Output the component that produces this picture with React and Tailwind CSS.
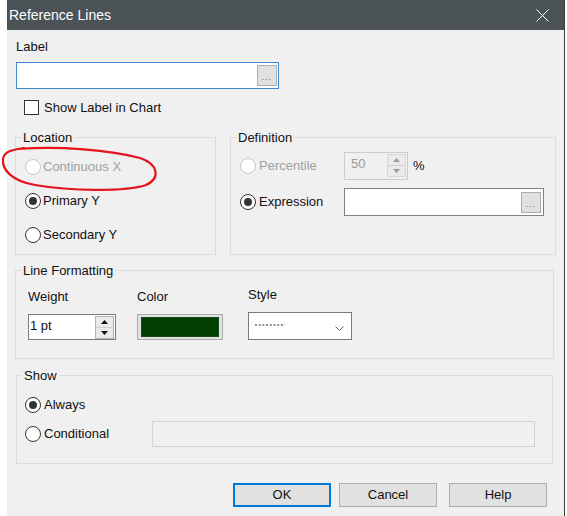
import React from 'react';

const Radio = ({ checked, disabled }) => (
  <span
    className={`flex h-[16px] w-[16px] shrink-0 items-center justify-center rounded-full border bg-white ${
      disabled ? 'border-[#c8c8c8]' : 'border-[#333333]'
    }`}
  >
    {checked && <span className="h-[8px] w-[8px] rounded-full bg-[#333333]" />}
  </span>
);

const DotsButton = () => (
  <span className="flex h-[21px] w-[20px] items-end justify-center border border-[#adadad] bg-[#e1e1e1] pb-[3px] text-[9px] leading-[9px] tracking-[1px] text-[#666]">
    ...
  </span>
);

const Arrow = ({ up, color }) => (
  <svg width="7" height="4" viewBox="0 0 7 4">
    {up ? <path d="M0 4 L3.5 0 L7 4 Z" fill={color} /> : <path d="M0 0 L3.5 4 L7 0 Z" fill={color} />}
  </svg>
);

const SpinButtons = ({ disabled }) => {
  const color = disabled ? '#9a9a9a' : '#111';
  return (
    <div className={`flex h-[23px] w-[19px] flex-col border ${disabled ? 'border-[#d6d6d6]' : 'border-[#b4b4b4]'}`}>
      <div className="flex flex-1 items-center justify-center border-b border-[#cfcfcf] bg-[#eaeaea]">
        <Arrow up color={color} />
      </div>
      <div className="flex flex-1 items-center justify-center bg-[#eaeaea]">
        <Arrow color={color} />
      </div>
    </div>
  );
};

const Legend = ({ children }) => (
  <legend className="ml-[5px] px-[2px] leading-[15px]">{children}</legend>
);

const App = () => {
  return (
    <div className="relative flex h-[516px] w-[567px] overflow-hidden bg-white font-['Liberation_Sans',Arial,sans-serif] text-[13px] text-[#111]">
      <div className="ml-[7px] flex w-[558px] flex-col border-r border-[#3b3b3b] bg-[#f0f0f0]">
        {/* title bar */}
        <div className="flex h-[30px] shrink-0 items-center justify-between bg-[#4b5357] pl-[2px] pr-[15px] text-white">
          <span className="text-[14px]">Reference Lines</span>
          <svg width="13" height="13" viewBox="0 0 13 13">
            <path d="M0.5 0.5 L12.5 12.5 M12.5 0.5 L0.5 12.5" stroke="#ffffff" strokeWidth="1" />
          </svg>
        </div>

        {/* label */}
        <div className="mt-[9px] ml-[9px] leading-[16px]">Label</div>
        <div className="mt-[7px] ml-[9px] flex h-[27px] w-[263px] items-center justify-end border border-[#3d8ad3] bg-white pr-[1px]">
          <DotsButton />
        </div>
        <div className="mt-[11px] ml-[17px] flex items-center">
          <span className="h-[15px] w-[15px] border border-[#333] bg-white" />
          <span className="ml-[5px] leading-[15px]">Show Label in Chart</span>
        </div>

        {/* location + definition */}
        <div className="mt-[15px] flex">
          <fieldset className="ml-[8px] h-[125px] w-[201px] border border-[#dcdcdc]">
            <Legend>Location</Legend>
            <div className="flex flex-col gap-[18px] pt-[14px] pl-[9px]">
              <div className="flex items-center">
                <Radio disabled />
                <span className="ml-[2px] leading-[16px] text-[#a0a0a0]">Continuous X</span>
              </div>
              <div className="flex items-center">
                <Radio checked />
                <span className="ml-[2px] leading-[16px]">Primary Y</span>
              </div>
              <div className="flex items-center">
                <Radio />
                <span className="ml-[2px] leading-[16px]">Secondary Y</span>
              </div>
            </div>
          </fieldset>

          <fieldset className="ml-[14px] h-[125px] w-[326px] border border-[#dcdcdc]">
            <Legend>Definition</Legend>
            <div className="flex flex-col gap-[8px] pt-[7px] pl-[9px]">
              <div className="flex h-[28px] items-center">
                <div className="flex w-[104px] items-center">
                  <Radio disabled />
                  <span className="ml-[3px] text-[#a0a0a0]">Percentile</span>
                </div>
                <div className="flex h-[28px] w-[64px] items-start justify-between border border-[#cccccc] bg-[#f0f0f0] pt-[1px] pr-[1px]">
                  <span className="pl-[6px] pt-[2px] leading-[16px] text-[#9a9a9a]">50</span>
                  <SpinButtons disabled />
                </div>
                <span className="ml-[5px]">%</span>
              </div>
              <div className="flex h-[28px] items-center">
                <div className="flex w-[104px] items-center">
                  <Radio checked />
                  <span className="ml-[3px]">Expression</span>
                </div>
                <div className="flex h-[28px] w-[200px] items-center justify-end border border-[#828282] bg-white pr-[2px]">
                  <DotsButton />
                </div>
              </div>
            </div>
          </fieldset>
        </div>

        {/* line formatting */}
        <fieldset className="mt-[8px] ml-[8px] h-[96px] w-[539px] border border-[#dcdcdc]">
          <Legend>Line Formatting</Legend>
          <div className="flex pt-[11px] pl-[12px]">
            <div className="flex w-[88px] flex-col">
              <span className="leading-[16px]">Weight</span>
              <div className="mt-[9px] flex h-[26px] items-start justify-between border border-[#7a7a7a] bg-white pt-[1px] pr-[1px]">
                <span className="pl-[1px] pt-[2px] leading-[16px]">1 pt</span>
                <SpinButtons />
              </div>
            </div>
            <div className="ml-[21px] flex w-[86px] flex-col">
              <span className="leading-[16px]">Color</span>
              <div className="mt-[9px] flex h-[26px] border border-[#adadad] bg-[#e1e1e1] p-[2px_3px]">
                <span className="flex-1 border border-[#1a4a1a] bg-[#013f01]" />
              </div>
            </div>
            <div className="-mt-[2px] ml-[25px] flex w-[104px] flex-col">
              <span className="leading-[16px]">Style</span>
              <div className="mt-[9px] flex h-[28px] items-center justify-between border border-[#7a7a7a] bg-white pr-[7px] pl-[6px]">
                <svg width="30" height="2" viewBox="0 0 30 2" className="-mt-[2px]">
                  <line x1="0" y1="1" x2="30" y2="1" stroke="#222" strokeWidth="1" strokeDasharray="2 1.7" />
                </svg>
                <svg width="9" height="5" viewBox="0 0 9 5" className="mt-[4px]">
                  <path d="M0.5 0.5 L4.5 4.5 L8.5 0.5" fill="none" stroke="#606060" strokeWidth="1" />
                </svg>
              </div>
            </div>
          </div>
        </fieldset>

        {/* show */}
        <fieldset className="mt-[9px] ml-[9px] h-[96px] w-[537px] border border-[#dcdcdc]">
          <Legend>Show</Legend>
          <div className="flex flex-col gap-[8px] pt-[14px] pl-[8px]">
            <div className="flex h-[16px] items-center">
              <Radio checked />
              <span className="ml-[3px]">Always</span>
            </div>
            <div className="flex h-[26px] items-center">
              <div className="flex w-[127px] items-center">
                <Radio />
                <span className="ml-[3px]">Conditional</span>
              </div>
              <div className="h-[26px] w-[383px] border border-[#d2d2d2] bg-[#f0f0f0]" />
            </div>
          </div>
        </fieldset>

        {/* buttons */}
        <div className="mt-[19px] flex justify-end pr-[17px]">
          <button className="h-[24px] w-[98px] border-2 border-[#0078d7] bg-[#e1e1e1]">OK</button>
          <button className="ml-[8px] h-[24px] w-[98px] border border-[#adadad] bg-[#e1e1e1]">Cancel</button>
          <button className="ml-[12px] h-[24px] w-[98px] border border-[#adadad] bg-[#e1e1e1]">Help</button>
        </div>
      </div>

      {/* hand-drawn red annotation */}
      <svg className="pointer-events-none absolute top-0 left-0" width="567" height="516" viewBox="0 0 567 516">
        <path
          d="M18 149 C60 146, 110 150, 140 158 C158 164, 161 178, 146 185 C125 192, 70 191, 35 185 C12 181, 2 170, 3 159 C4 151, 12 150, 24 148"
          fill="none"
          stroke="#e3141c"
          strokeWidth="2.2"
          strokeLinecap="round"
        />
      </svg>
    </div>
  );
};

export default App;
